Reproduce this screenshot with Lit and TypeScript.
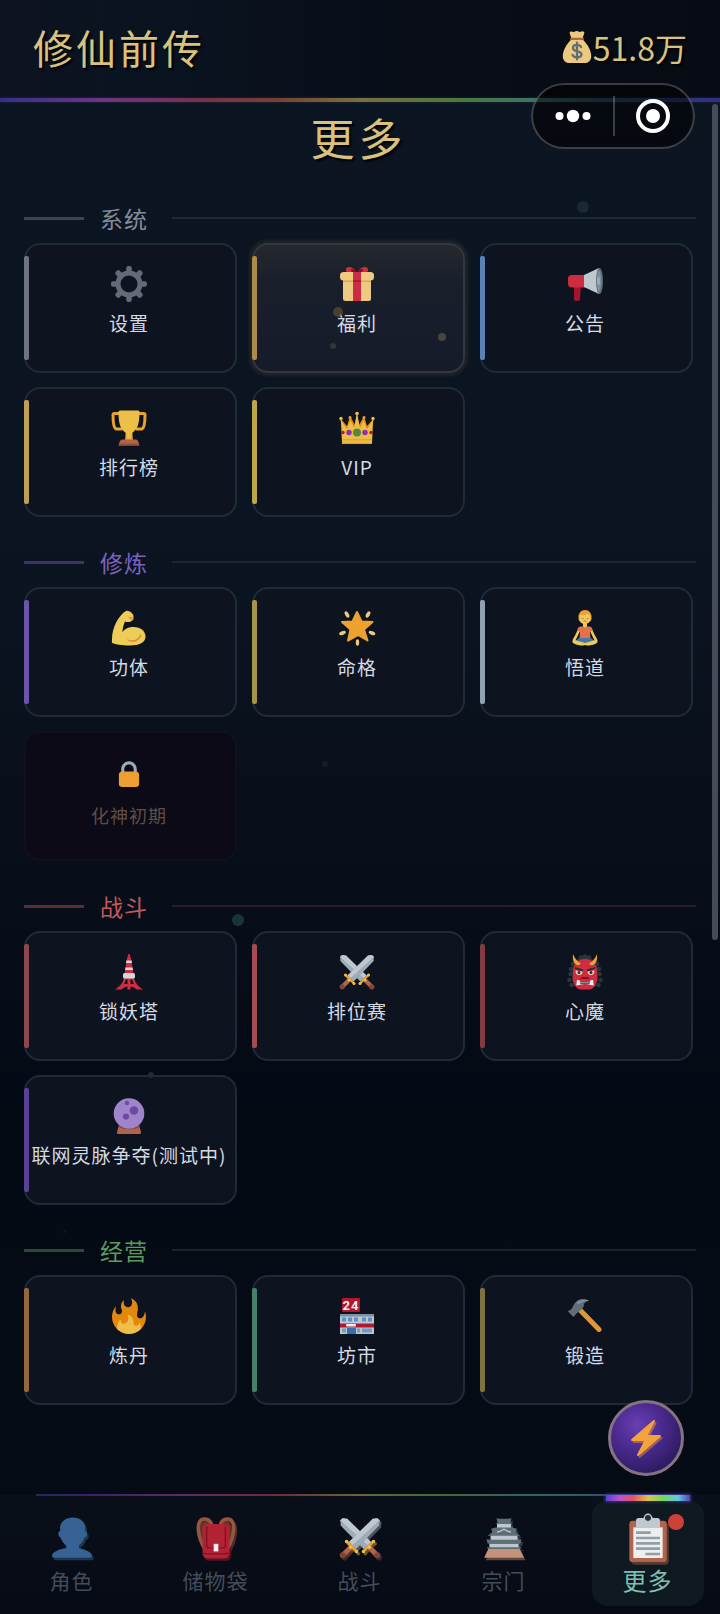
import { LitElement, html, svg, css } from "lit";
import type { SVGTemplateResult } from "lit";
import { customElement, property } from "lit/decorators.js";
import { classMap } from "lit/directives/class-map.js";
import { styleMap } from "lit/directives/style-map.js";

const sword = svg`
  <path fill="#8899A6" d="M1 3L3 1l4 0.500L27.500 21.500 21.500 27.500 1.500 7z"/>
  <path fill="#CCD6DD" d="M1 3L3 1l4 0.500L27.500 21.500 24.500 24.500z"/>
  <path fill="#AAB8C2" d="M2 4l22.500 20.500-3 3L1.500 7z"/>
  <path fill="#BF6952" d="M24.500 27.500l3-3 6.500 6.500-3 3z"/>
  <circle cx="32.800" cy="32.800" r="2.600" fill="#8A4B38"/>
  <path fill="none" stroke="#FFAC33" stroke-width="2.200" stroke-linecap="round" d="M21 29.500l8.500-8.500"/>
  <circle cx="21" cy="29.500" r="1.500" fill="#FFCC4D"/><circle cx="29.500" cy="21" r="1.500" fill="#FFCC4D"/>
  <circle cx="26" cy="26" r="1.500" fill="#FFCC4D"/>`;

const ICONS: Record<string, SVGTemplateResult> = {
  gear: svg`
    <circle cx="18" cy="18" r="11" fill="none" stroke="#6A7280" stroke-width="5"/>
    ${[0, 45, 90, 135].map(
      (a) => svg`<g transform="rotate(${a} 18 18)" fill="#6A7280">
        <rect x="15.200" y="0" width="5.600" height="8.500" rx="2.200"/>
        <rect x="15.200" y="27.500" width="5.600" height="8.500" rx="2.200"/></g>`
    )}`,
  gift: svg`
    <path fill="#DA2F47" d="M18 8C14 8 8 7 7 5c-1-2 1-4 3-4 4 0 6 3 8 6 2-3 4-6 8-6 2 0 4 2 3 4-1 2-7 3-11 3z"/>
    <path fill="#A0041E" d="M18 8c-1-3-3-5-5-5s-1 4 5 5c6-1 7-5 5-5s-4 2-5 5z"/>
    <rect x="4" y="12" width="28" height="23" rx="2.500" fill="#FDD888"/>
    <path fill="#FCAB40" d="M4 14h28v2H4z"/>
    <rect x="1" y="6" width="34" height="8.500" rx="3.500" fill="#FDD888"/>
    <path fill="#DA2F47" d="M14 6h8v29h-8z"/><path fill="#A0041E" opacity=".5" d="M14 14h8v2h-8z"/>`,
  megaphone: svg`
    <path fill="#B0142E" d="M7 19h7l-1 14c0 1.500-1.500 2-3 2s-3-.5-3-2z"/>
    <rect x="1" y="9" width="20" height="12.500" rx="4" fill="#DD2E44"/>
    <path fill="#CCD6DD" d="M17 9L32 2v26l-15-7z"/>
    <ellipse cx="32.500" cy="15" rx="3.500" ry="13" fill="#66757F"/>
    <ellipse cx="32" cy="15" rx="2.200" ry="10.500" fill="#8899A6"/>
    <ellipse cx="31.500" cy="15" rx="1.500" ry="4" fill="#AAB8C2"/>`,
  trophy: svg`
    <path fill="none" stroke="#FFAC33" stroke-width="3" stroke-linejoin="round" d="M9 3.500H3.500q-1.500 0-1.500 1.500c0 7 1 13 3 14h6M27 3.500h5.500q1.500 0 1.500 1.500c0 7-1 13-3 14h-6"/>
    <path fill="#FFAC33" d="M15 18h6l1 13h-8z"/>
    <path fill="#FFCC4D" d="M7.500 2c0-1 1-1.500 2-1.500h17c1 0 2 .5 2 1.500 0 11-2 18-7 20.500-1.500 1.500-1.500 6-1.500 6h-4s0-4.500-1.500-6c-5-2.500-7-9.500-7-20.500z"/>
    <path fill="#C1694F" d="M11 29.500h14c2 0 3 4 3.500 6h-21c.5-2 1.500-6 3.500-6z"/>
    <path fill="#A0553E" d="M8 33.500h20v2H8z"/>`,
  crown: svg`
    <path fill="#F4900C" d="M5 27L1 8l7 8 3-10 5 9 2-12 2 12 5-9 3 10 7-8-4 19z"/>
    <path fill="#FFCC4D" d="M3 34L2 10l6 9 3.500-9 3.500 8 3-15 3 15 3.500-8 3.500 9 6-9-1 24z"/>
    <circle cx="2" cy="8.500" r="1.700" fill="#FFCC4D"/><circle cx="34" cy="8.500" r="1.700" fill="#FFCC4D"/>
    <circle cx="11" cy="7.500" r="1.500" fill="#FFAC33"/><circle cx="25" cy="7.500" r="1.500" fill="#FFAC33"/>
    <circle cx="18" cy="3.500" r="1.800" fill="#FFCC4D"/>
    <path fill="#FFAC33" d="M3 29h30v1.500H3zM3 32.500h30V34H3z"/>
    <circle cx="18" cy="22.500" r="4" fill="#5C913B"/><circle cx="10" cy="22.500" r="2.700" fill="#9733B8"/>
    <circle cx="26" cy="22.500" r="2.700" fill="#9733B8"/><circle cx="4" cy="22.500" r="1.700" fill="#BE1931"/>
    <circle cx="32" cy="22.500" r="1.700" fill="#BE1931"/>`,
  arm: svg`
    <path fill="#FFDC5D" d="M15 1c2-1.500 8 2.500 7.500 5.500-.3 1.500.5 2-.5 3-.5 2-5 3.500-8 2-1 2-2.500 7-2.500 10.500 3-4 7-5 11-5 7 0 12 4 12 9.500 0 6-6 9-16 9-8 0-14-1-17-2.500C.5 33 1 31 1 29 1 17 8 5 15 1z"/>
    <path fill="#EF9645" d="M16 6.500c2 0 4 1 6 1-.5 1.500-1 2.500-2 2.500-1-1.500-2-2.500-4-3.500zM29 24.500c-1 5-8 7.500-13.500 4.500 4.500 5.500 13.500 3 15-4.500z"/>`,
  star: svg`
    <path fill="#FFAC33" stroke="#FFAC33" stroke-width="2" stroke-linejoin="round" d="M18 2l4.500 9.500 11 .5-8.500 7.500 3.500 11L19 25l-10 5.500 2.500-11L3 12l10.500-.5z"/>
    <g fill="#FFD983">
      <ellipse cx="8" cy="4.500" rx="1.800" ry="3.500" transform="rotate(-30 8 4.500)"/>
      <ellipse cx="29" cy="4.500" rx="1.800" ry="3.500" transform="rotate(30 29 4.500)"/>
      <ellipse cx="3.500" cy="23" rx="1.800" ry="3.500" transform="rotate(68 3.500 23)"/>
      <ellipse cx="33" cy="23" rx="1.800" ry="3.500" transform="rotate(-68 33 23)"/>
      <ellipse cx="18.500" cy="32.500" rx="1.700" ry="3.300"/>
    </g>`,
  lotus: svg`
    <path fill="none" stroke="#FFDC5D" stroke-width="2.600" stroke-linecap="round" stroke-linejoin="round" d="M12.500 19L9 26.500l-2 3.500M23.500 19l3.500 7.500 2 3.500"/>
    <path fill="#F4794D" d="M14 16.500h8c2.500 0 3.500 1.500 3.500 4L23 22l.5 7h-11l.5-7-2.500-1.500c0-2.500 1-4 3.500-4z"/>
    <path fill="#4A7FB5" d="M12 28h12l5 4-5 2H12l-5-2z"/>
    <path fill="#FFDC5D" d="M6 30c4 0 7 2 12 3 5-1 8-3 12-3 1.500 2 0 3.500-2 4-4 1.500-7 2-10 1-3 1-6 .5-10-1-2-.5-3.500-2-2-4zM16 12h4v4.500c-1 1.200-3 1.200-4 0z"/>
    <path fill="#FFAC33" d="M11.500 8.500C11 3 14 0 18 0s7 3 6.500 8.500c-.5 3-1.500 3-2 3h-9c-.5 0-1.500 0-2-3z"/>
    <path fill="#FFDC5D" d="M12.500 9c0-2 0-3 .5-4 3 .5 7 0 8-1.500 1 1 2 2 2.500 5 0 3-2.500 5.500-5.500 5.500s-5.500-2-5.500-5z"/>
    <path fill="none" stroke="#C1694F" stroke-width=".8" d="M14.500 8.500h2M19.500 8.500h2M16.500 11h3"/>`,
  lock: svg`
    <path fill="#AAB8C2" d="M18 3C12.477 3 8 7.477 8 13v10h4V13c0-3.313 2.686-6 6-6s6 2.687 6 6v10h4V13c0-5.523-4.477-10-10-10z"/>
    <path fill="#FFAC33" d="M31 32c0 2.209-1.791 4-4 4H9c-2.209 0-4-1.791-4-4V20c0-2.209 1.791-4 4-4h18c2.209 0 4 1.791 4 4v12z"/>`,
  tower: svg`
    <path fill="#DD2E44" d="M17.300 0h1.400l1.800 7 2 14h-9l2-14z"/>
    <path fill="#E1E8ED" d="M15.400 6.500h5.200l.4 2.500h-6zM14.500 13.500h7l.5 2.500h-8z"/>
    <path fill="#DD2E44" d="M13 24h10c1 5 5 9.500 9.500 11.500h-7c-2-2-4.500-3-6-3v3h-3v-3c-1.500 0-4 1-6 3h-7C8 33.500 12 29 13 24z"/>
    <path fill="#0d1420" d="M15 25.500h1.500V30h-3.300zM19.500 25.500H21l1.800 4.500h-3.300z"/>
    <rect x="12" y="19" width="12" height="5.500" rx="1.500" fill="#E1E8ED"/>`,
  swords: svg`${sword}<g transform="translate(36 0) scale(-1 1)">${sword}</g>`,
  ogre: svg`
    <g fill="#31373D">
      ${[[6, 10], [4, 15], [3.500, 20], [2.500, 26], [4.500, 31], [30, 10], [32, 15], [32.500, 20], [33.500, 26], [31.500, 31], [14, 3.500], [22, 3.500], [18, 2.500]].map(
        ([x, y]) => svg`<circle cx=${x} cy=${y} r="2.300"/>`
      )}
      <path d="M18 3c9 0 13 7 13 15 0 5 0 9-2 14H7c-2-5-2-9-2-14C5 10 9 3 18 3z"/>
    </g>
    <path fill="#DD2E44" d="M18 5c8 0 12 6 12 13 0 4 1 8-1 11-1 4-4 6.500-7 6.500h-8c-3 0-6-2.500-7-6.500-2-3-1-7-1-11C6 11 10 5 18 5z"/>
    <path fill="#FFAC33" d="M6 0c-.5 5 0 9 4 11 2 .5 4-.5 3.500-2C11 8 8 5 6 0zM30 0c.5 5 0 9-4 11-2 .5-4-.5-3.500-2C25 8 28 5 30 0z"/>
    <path fill="#292F33" d="M8 13l8 2.500v2L8 15zM28 13l-8 2.500v2l8-2.500z"/>
    <path fill="#FFE8B6" d="M8.500 16.500l7 1c0 2-1 3.500-3.500 3.500s-3.500-2-3.500-4.500zM27.500 16.500l-7 1c0 2 1 3.500 3.500 3.500s3.500-2 3.500-4.500z"/>
    <circle cx="12" cy="18.500" r="1.500" fill="#292F33"/><circle cx="24" cy="18.500" r="1.500" fill="#292F33"/>
    <path fill="#A0041E" d="M15 23h6l1.500 2h-9z"/>
    <path fill="#fff" d="M10 26h2l1.500 2h9L24 26h2l.8 5.500-3-.5c-4-1.200-7.600-1.200-11.600 0l-3 .5z"/>
    <path fill="#292F33" d="M12.500 28.500h11l-1 1.200h-9z"/>`,
  crystal: svg`
    <path fill="#C1694F" d="M8 27h20l2 7c.3 1-.2 2-1.500 2h-21C6.200 36 5.700 35 6 34z"/>
    <path fill="#8A4B38" d="M8 27h20l.6 2c-6 3-15 3-21 0z"/>
    <circle cx="18" cy="15.500" r="15.300" fill="#AA8DD8"/>
    <circle cx="16" cy="5" r="2.200" fill="#7450A8"/><circle cx="23" cy="12.500" r="4.300" fill="#7450A8"/>
    <circle cx="15" cy="18.500" r="3.100" fill="#7450A8"/>`,
  fire: svg`
    <path fill="#F4900C" d="M35 19c0-2.062-.367-4.039-1.040-5.868-.46 5.389-3.333 8.157-6.335 6.868-2.812-1.208-.917-5.917-.777-8.164.236-3.809-.012-8.169-6.931-11.794 2.875 5.500.333 8.917-2.333 9.125-2.958.231-5.667-2.542-4.667-7.042-3.238 2.386-3.332 6.402-2.333 9 1.042 2.708-.042 4.958-2.583 5.208-2.840.28-4.418-3.041-2.963-8.333C2.520 10.965 1 14.805 1 19c0 9.389 7.611 17 17 17s17-7.611 17-17z"/>
    <path fill="#FFCC4D" d="M28.394 23.999c.148 3.084-2.561 4.293-4.019 3.709-2.106-.843-1.541-2.291-2.083-5.291s-2.625-5.083-5.708-6c2.250 6.333-1.247 8.667-3.080 9.084-1.872.426-3.753-.001-3.968-4.007C7.352 23.668 6 26.676 6 30c0 .368.023.73.055 1.090C9.125 34.124 13.342 36 18 36s8.875-1.876 11.945-4.910c.032-.36.055-.722.055-1.090 0-2.187-.584-4.236-1.606-6.001z"/>`,
  store: svg`
    <rect x="3" y="0" width="18" height="14" rx="1" fill="#BE1931"/>
    <text class="sign" x="12" y="12" text-anchor="middle">24</text>
    <path fill="#CCD6DD" d="M1 16h34v20H1z"/>
    <path fill="#8899A6" d="M1 16h34v2.500H1z"/>
    <path fill="#5C9DDB" d="M3 19.500h4v4H3zM9 19.500h4v4H9zM15 19.500h4v4h-4zM23 19.500h4v4h-4zM29 19.500h4v4h-4z"/>
    <path fill="#BE1931" d="M1 25.500h34v4H1z"/><rect x="7" y="26" width="10" height="2.500" rx="1" fill="#fff"/>
    <path fill="#77A9DC" d="M3 30.500h4v4H3zM18 30.500h3v4h-3zM23 30.500h10v4H23z"/><path fill="#3B78B8" d="M8 30h9v6H8z"/>`,
  hammer: svg`
    <path fill="none" stroke="#F4A136" stroke-width="5" stroke-linecap="round" d="M14 13l18 18.500"/>
    <path fill="#66757F" d="M22 3c-2 0-4 1-5 3 0 2-1 4-2 5L9 16c-1 1-1 2-2.500 3L1 13.500c0-1 2-1 3-2C6 9 7 5 10 3c4-3 10-2 12 0z"/>
    <path fill="#8899A6" d="M9 5c4-4 10-4 13-2-4-.5-7 1-10 3z"/>`,
  bag: svg`
    <path fill="#FDD888" d="M11 10h14c5 5 9 12 9 18 0 5-3 8-8 8H10c-5 0-8-3-8-8 0-6 4-13 9-18z"/>
    <path fill="#FDD888" d="M10 1c2-1.500 3 .5 4.500 0S17 0 18 0s2 1 3.500 1S24-.5 26 1c1 1-1 4-1.500 7h-13C11 5 9 2 10 1z"/>
    <path fill="#BF6952" d="M11 7.500h14c1 0 1 2.500 0 2.500H11c-1 0-1-2.500 0-2.500z"/>
    <path fill="none" stroke="#67757F" stroke-width="2.600" stroke-linecap="round" d="M22.500 18c-1-2-3-2.300-4.500-2.300-2.500 0-4.500 1.300-4.500 3.500 0 5 9.500 2.500 9.500 7 0 2.300-2.300 3.500-5 3.500-2 0-4-.7-5-2.700M18 13v19"/>`,
  bolt: svg`
    <path fill="#FFAC33" d="M32.938 15.651C32.792 15.260 32.418 15 32 15H19.925L26.890 1.458c.219-.426.106-.947-.271-1.243C26.437.071 26.218 0 26 0c-.233 0-.466.082-.653.243L18 6.588 3.347 19.243c-.316.273-.43.714-.284 1.105S3.582 21 4 21h12.075L9.110 34.542c-.219.426-.106.947.271 1.243.182.144.401.215.619.215.233 0 .466-.082.653-.243L18 29.412l14.653-12.655c.317-.273.43-.714.285-1.106z"/>`,
  person: svg`
    <path fill="#3A6A9E" d="M24 26.799v-2.566c2-1.348 4.080-3.779 4.703-6.896.186.103.206.17.413.17.991 0 1.709-1.287 1.709-2.873 0-1.562-.823-2.827-1.794-2.865.187-.674.293-1.577.293-2.735C29.324 5.168 26 .527 18.541.527c-6.629 0-10.777 4.641-10.777 8.507 0 1.123.069 2.043.188 2.755-.911.137-1.629 1.352-1.629 2.845 0 1.587.804 2.873 1.796 2.873.206 0 .025-.067.209-.17C8.952 20.453 11 22.885 13 24.232v2.414c-5 .645-12 3.437-12 6.230v1.061C1 35 2.076 35 3.137 35h29.725C33.924 35 35 35 35 33.938v-1.061c0-2.615-6-5.225-11-6.078z"/>`,
  backpack: svg`
    <path fill="none" stroke="#6E3A2B" stroke-width="3" d="M12 5C5 4 3 13 9 27M24 5c7-1 9 8 3 22"/>
    <path fill="none" stroke="#A35C45" stroke-width="3" d="M14 7c0-4-4-6-8-5-5 3-4 14 2 25M22 7c0-4 4-6 8-5 5 3 4 14-2 25"/>
    <rect x="6.500" y="6" width="23" height="29.500" rx="4" fill="#BE2437"/>
    <path fill="none" stroke="#8E1326" stroke-width="1.200" d="M10 8v17c0 1 1 1.500 2 1.500h12c1 0 2-.5 2-1.500V8M7 31c3 1 19 1 22 0"/>
    <rect x="16" y="23" width="4" height="6.500" fill="#fff"/>`,
  castle: svg`
    <path fill="#66757F" d="M11.500 1c1.500.7 11.500.7 13 0l-1 3.500 1.500 1.500H11l1.500-1.500z"/>
    <path fill="#CCD6DD" d="M12 6h12v4H12z"/>
    <path fill="#66757F" d="M7 10l4-1h14l4 1-1 3 4 3H4l4-3z"/>
    <path fill="none" stroke="#CCD6DD" stroke-width="1.200" d="M12 13c3-.5 5-2 6-2.500 1 .5 3 2 6 2.500"/>
    <path fill="#CCD6DD" d="M6.500 16h23v4h-23z"/>
    <path fill="#66757F" d="M3 19l4 .5h22l4-.5-1 4H4z"/>
    <path fill="#CCD6DD" d="M5.500 23h25v3.500h-25z"/>
    <path fill="#66757F" d="M3 26h30l-1.500 1.500h-27z"/>
    <path fill="#D39B82" d="M4.500 27.500h27L35 35H1z"/>`,
  clipboard: svg`
    <rect x="4" y="5" width="28" height="31" rx="2.500" fill="#BF6952"/>
    <path fill="#fff" d="M7 10h22v23H7z"/>
    <path fill="#CCD6DD" d="M11 3h4.200a3 3 0 0 1 5.600 0H25c1.500 0 2 1 2 2v5H9V5c0-1 .5-2 2-2z"/>
    <circle cx="18" cy="3" r="2.300" fill="#292F33"/><circle cx="18" cy="3" r="2.800" fill="none" stroke="#CCD6DD" stroke-width="1"/>
    <path stroke="#99AAB5" stroke-width="2" d="M9 14h11M9 18h18M9 22h18M9 26h18M16 30h11"/>`,
};

@customElement("emoji-icon")
class EmojiIcon extends LitElement {
  @property() name = "gear";
  @property({ type: Boolean }) shadow = false;

  static styles = css`
    :host { display: block; opacity: .93; }
    svg { display: block; width: 100%; height: 100%; overflow: visible; }
    .sign { font: bold 13px "Roboto", "Liberation Sans", sans-serif; fill: #fff; }
  `;

  render() {
    const art = ICONS[this.name];
    return html`<svg viewBox="0 0 36 36" aria-hidden="true">
      ${this.shadow ? svg`<g opacity=".45" transform="translate(1.5 2)">${art}</g>` : ""}${art}
    </svg>`;
  }
}

interface Tile { icon: string; label: string; bar?: string; featured?: boolean; locked?: boolean; }
interface Group { title: string; color: string; lead: string; rule: string; tiles: Tile[]; }

const GROUPS: Group[] = [
  {
    title: "系统", color: "#868b99", lead: "#3c4550", rule: "#1d2934",
    tiles: [
      { icon: "gear", label: "设置", bar: "#6d7381" },
      { icon: "gift", label: "福利", bar: "#ad8a49", featured: true },
      { icon: "megaphone", label: "公告", bar: "#5c81b4" },
      { icon: "trophy", label: "排行榜", bar: "#bfa055" },
      { icon: "crown", label: "VIP", bar: "#bea64a" },
    ],
  },
  {
    title: "修炼", color: "#7e62bd", lead: "#3b3567", rule: "#1d2239",
    tiles: [
      { icon: "arm", label: "功体", bar: "#6c54a8" },
      { icon: "star", label: "命格", bar: "#a3944a" },
      { icon: "lotus", label: "悟道", bar: "#90a1b0" },
      { icon: "lock", label: "化神初期", locked: true },
    ],
  },
  {
    title: "战斗", color: "#c4595b", lead: "#5c2d34", rule: "#2b1b26",
    tiles: [
      { icon: "tower", label: "锁妖塔", bar: "#8d484d" },
      { icon: "swords", label: "排位赛", bar: "#a44c51" },
      { icon: "ogre", label: "心魔", bar: "#843b40" },
      { icon: "crystal", label: "联网灵脉争夺(测试中)", bar: "#594196" },
    ],
  },
  {
    title: "经营", color: "#5b9c62", lead: "#2c4a38", rule: "#1b2426",
    tiles: [
      { icon: "fire", label: "炼丹", bar: "#93673f" },
      { icon: "store", label: "坊市", bar: "#47806a" },
      { icon: "hammer", label: "锻造", bar: "#7d733e" },
    ],
  },
];

const TABS = [
  { icon: "person", label: "角色" },
  { icon: "backpack", label: "储物袋" },
  { icon: "swords", label: "战斗" },
  { icon: "castle", label: "宗门" },
  { icon: "clipboard", label: "更多", active: true },
];

const SPARKS: [number, number, number, string][] = [
  [81, 105, 12, "#1b2733"],
  [47, 210, 10, "#6b5a3290"],
  [46.2, 244, 6, "#353537"],
  [61.4, 235, 8, "#4b4540"],
  [45.2, 662, 6, "#161c26"],
  [33.1, 818, 12, "#1c3439"],
  [21, 973, 6, "#202b37"],
  [8.9, 1129, 3, "#10171f"],
];

@customElement("app-root")
class AppRoot extends LitElement {
  static styles = css`
    :host {
      display: flex;
      flex-direction: column;
      min-height: 100vh;
      box-sizing: border-box;
      color: #d5dae3;
      font-family: "Noto Sans CJK SC", "Noto Sans", sans-serif;
      background: linear-gradient(180deg, #0b1623 0, #0b1522 32%, #09101c 48%, #040a14 70%, #060c15 84%, #050a13 100%);
    }
    * { box-sizing: border-box; }
    button { font: inherit; color: inherit; cursor: pointer; }

    .top {
      position: relative;
      display: flex;
      align-items: center;
      justify-content: space-between;
      height: 102px;
      padding: 0 33px 8px;
      background: linear-gradient(90deg, #0e1320 0, #0a1421 18%, #080d17 60%, #070b14 100%);
    }
    .top::after {
      content: "";
      position: absolute;
      inset: auto 0 0;
      height: 4px;
      background: linear-gradient(90deg, #35308a 0, #6d3585 14%, #7a2f4c 28%, #75402f 38%, #77703a 50%, #4a7a39 64%, #3c7560 74%, #2c5064 84%, #302e86 100%);
      box-shadow: 0 0 3px #2a2548;
    }
    .brand, .coins, .title { color: #dac27c; text-shadow: 2px 2px 2px #000; font-weight: 400; margin: 0; }
    .brand { font-size: 40px; line-height: 56px; letter-spacing: 3px; }
    .coins { display: flex; align-items: center; font-size: 32px; line-height: 48px; }
    .coins emoji-icon { width: 32px; height: 32px; }

    .capsule {
      position: absolute;
      z-index: 2;
      top: 83px;
      right: 25px;
      display: flex;
      align-items: center;
      width: 164px;
      height: 66px;
      border: 2px solid #ffffff38;
      border-radius: 33px;
      background: #00000088;
    }
    .capsule button { flex: 1; display: grid; place-items: center; height: 100%; padding: 0; border: 0; background: none; }
    .capsule button + button { position: relative; }
    .capsule button + button::before { content: ""; position: absolute; left: 0; top: 11px; bottom: 11px; width: 2px; background: #ffffff38; }
    .capsule svg { width: 36px; height: 36px; fill: #fff; }

    .page { position: relative; flex: 1; padding: 7px 27px 90px 24px; }
    .title { margin-bottom: 36px; font-size: 44px; line-height: 56px; letter-spacing: 4px; text-align: center; }
    .group + .group { margin-top: 28px; }
    .head { display: flex; align-items: center; gap: 16px; height: 34px; margin: 0 -3px 8px 0; }
    .head h2 { margin: 0; padding-right: 8px; font-size: 23px; line-height: 34px; font-weight: 400; letter-spacing: 1px; }
    .lead { width: 60px; height: 3px; }
    .rule { flex: 1; height: 2px; }
    .grid { display: grid; grid-template-columns: repeat(3, minmax(0, 1fr)); gap: 14px 15px; }

    .tile {
      position: relative;
      display: flex;
      flex-direction: column;
      align-items: center;
      gap: 9px;
      height: 130px;
      padding: 21px 3px 0 0;
      border: 2px solid #202b37;
      border-radius: 16px;
      background: #0d1420;
      font-size: 19px;
      line-height: 24px;
      letter-spacing: 1px;
      white-space: nowrap;
    }
    .tile emoji-icon { width: 36px; height: 36px; }
    .bar { position: absolute; left: -2px; top: 11px; bottom: 11px; width: 5px; border-radius: 2px; }
    .featured {
      border-color: #33373e;
      background: linear-gradient(180deg, #26282d 0, #1a1f2c 28%, #161b2a 100%);
      box-shadow: 0 0 3px 3px #1f242a;
    }
    .locked { gap: 16px; padding-top: 26px; border-color: #12101d; background: #0d0a18; color: #5d4f45; font-size: 18px; }
    .locked emoji-icon { width: 28px; height: 28px; }

    .spark { position: absolute; border-radius: 50%; pointer-events: none; }
    .thumb { position: absolute; top: 2px; right: 2px; width: 6px; height: 60%; border-radius: 3px; background: #454b57; }
    .fab {
      position: absolute;
      right: 36px;
      bottom: 19px;
      display: grid;
      place-items: center;
      width: 76px;
      height: 76px;
      padding: 0;
      border: 3px solid #857381;
      border-radius: 50%;
      background: radial-gradient(circle at 38% 32%, #6a3fb2 0, #4d2b92 35%, #2f1c63 75%, #281854 100%);
    }
    .fab emoji-icon { width: 36px; height: 36px; }

    .tabs {
      position: relative;
      display: grid;
      grid-template-columns: repeat(5, 1fr);
      height: 119px;
      padding: 5px 0 8px;
      background: linear-gradient(180deg, #0a101a 0, #060a14 100%);
    }
    .tabs::before {
      content: "";
      position: absolute;
      left: 5%;
      right: 5%;
      top: -1px;
      height: 2px;
      background: linear-gradient(90deg, #2a2760 0, #34246a 8%, #5d2a66 22%, #6b3038 38%, #65673a 50%, #3d6b3c 64%, #2f5f6c 82%, #302e86 100%);
    }
    .tab {
      position: relative;
      display: flex;
      flex-direction: column;
      align-items: center;
      gap: 4px;
      margin: 0 16px;
      padding: 14px 1px 0 0;
      border-radius: 16px;
      color: #434d5a;
      font-size: 21px;
      line-height: 28px;
      letter-spacing: 1px;
      text-decoration: none;
      white-space: nowrap;
    }
    .slot { display: grid; place-items: center; height: 48px; }
    .slot emoji-icon { width: 42px; height: 42px; }
    .active { background: #0e1920; color: #7cc0b4; font-size: 24px; }
    .active::before {
      content: "";
      position: absolute;
      top: -5px;
      left: 14px;
      right: 14px;
      height: 6px;
      background: linear-gradient(90deg, #5a3fd8 0, #c04fd0 16%, #e05560 32%, #e0c050 50%, #78d850 66%, #62c8d8 86%, #5540c0 100%);
      box-shadow: 0 0 3px 1px #3c348c;
    }
    .active emoji-icon { width: 48px; height: 48px; }
    .dot { position: absolute; top: 14px; right: 20px; width: 16px; height: 16px; border-radius: 50%; background: #cc4038; }
  `;

  private tile(t: Tile) {
    return html`<button class=${classMap({ tile: true, featured: !!t.featured, locked: !!t.locked })} ?disabled=${t.locked}>
      ${t.bar ? html`<span class="bar" style=${styleMap({ background: t.bar })}></span>` : ""}
      <emoji-icon name=${t.icon}></emoji-icon>
      <span>${t.label}</span>
    </button>`;
  }

  render() {
    return html`
      <header class="top">
        <p class="brand">修仙前传</p>
        <p class="coins"><emoji-icon name="bag"></emoji-icon><span>51.8万</span></p>
        <div class="capsule">
          <button aria-label="菜单">
            <svg viewBox="0 0 36 36"><circle cx="4.500" cy="18" r="4"/><circle cx="18" cy="18" r="6.200"/><circle cx="31.500" cy="18" r="4"/></svg>
          </button>
          <button aria-label="关闭">
            <svg viewBox="0 0 36 36"><circle cx="18" cy="18" r="15" fill="none" stroke="#fff" stroke-width="4"/><circle cx="18" cy="18" r="7"/></svg>
          </button>
        </div>
      </header>
      <main class="page">
        <h1 class="title">更多</h1>
        ${GROUPS.map(
          (g) => html`<section class="group">
            <div class="head">
              <span class="lead" style=${styleMap({ background: g.lead })}></span>
              <h2 style=${styleMap({ color: g.color })}>${g.title}</h2>
              <span class="rule" style=${styleMap({ background: g.rule })}></span>
            </div>
            <div class="grid">${g.tiles.map((t) => this.tile(t))}</div>
          </section>`
        )}
        ${SPARKS.map(
          ([x, y, size, color]) => html`<i class="spark" style=${styleMap({
            left: `${x}%`, top: `${y - size / 2}px`, width: `${size}px`, height: `${size}px`,
            marginLeft: `${-size / 2}px`, background: color,
          })}></i>`
        )}
        <div class="thumb"></div>
        <button class="fab" aria-label="快捷"><emoji-icon name="bolt" shadow></emoji-icon></button>
      </main>
      <nav class="tabs">
        ${TABS.map(
          (t) => html`<a href="#" class=${classMap({ tab: true, active: !!t.active })}>
            <span class="slot"><emoji-icon name=${t.icon} shadow></emoji-icon></span>
            <span>${t.label}</span>
            ${t.active ? html`<i class="dot"></i>` : ""}
          </a>`
        )}
      </nav>
    `;
  }
}
